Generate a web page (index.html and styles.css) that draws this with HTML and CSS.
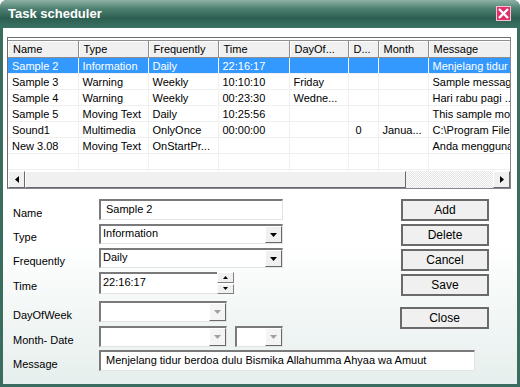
FILE: index.html
```
<!DOCTYPE html>
<html lang="en">
<head>
    <meta charset="UTF-8">
    <title>Task scheduler</title>
    <link rel="stylesheet" href="styles.css">
</head>
<body>
    <div class="window">
        <div class="titlebar">
            <span class="title">Task scheduler</span>
            <span class="close-x">
                <svg width="11" height="11" viewBox="0 0 11 11"><path d="M1 1 L10 10 M10 1 L1 10" stroke="#fff" stroke-width="2.4"/></svg>
            </span>
        </div>
        <div class="content">
            <div class="listview">
                <div class="list-clip">
                    <table class="grid">
                        <colgroup>
                            <col style="width:70px"><col style="width:70px"><col style="width:70px"><col style="width:71px">
                            <col style="width:59px"><col style="width:30px"><col style="width:50px"><col style="width:120px">
                        </colgroup>
                        <thead>
                            <tr><th>Name</th><th>Type</th><th>Frequently</th><th>Time</th><th>DayOf...</th><th>D...</th><th>Month</th><th>Message</th></tr>
                        </thead>
                        <tbody>
                            <tr class="selected"><td>Sample 2</td><td>Information</td><td>Daily</td><td>22:16:17</td><td></td><td></td><td></td><td>Menjelang tidur berdoa</td></tr>
                            <tr><td>Sample 3</td><td>Warning</td><td>Weekly</td><td>10:10:10</td><td>Friday</td><td></td><td></td><td>Sample message</td></tr>
                            <tr><td>Sample 4</td><td>Warning</td><td>Weekly</td><td>00:23:30</td><td>Wedne...</td><td></td><td></td><td>Hari rabu pagi ...</td></tr>
                            <tr><td>Sample 5</td><td>Moving Text</td><td>Daily</td><td>10:25:56</td><td></td><td></td><td></td><td>This sample moving</td></tr>
                            <tr><td>Sound1</td><td>Multimedia</td><td>OnlyOnce</td><td>00:00:00</td><td></td><td class="num">0</td><td>Janua...</td><td>C:\Program Files</td></tr>
                            <tr><td>New 3.08</td><td>Moving Text</td><td>OnStartPr...</td><td></td><td></td><td></td><td></td><td>Anda menggunakan</td></tr>
                            <tr><td></td><td></td><td></td><td></td><td></td><td></td><td></td><td></td></tr>
                            <tr><td></td><td></td><td></td><td></td><td></td><td></td><td></td><td></td></tr>
                        </tbody>
                    </table>
                </div>
                <div class="hscroll">
                    <div class="sb-btn"><svg width="4" height="7" viewBox="0 0 4 7"><path d="M4 0 L0 3.5 L4 7 Z" fill="#000"/></svg></div>
                    <div class="sb-thumb"></div>
                    <div class="sb-track"></div>
                    <div class="sb-btn"><svg width="4" height="7" viewBox="0 0 4 7"><path d="M0 0 L4 3.5 L0 7 Z" fill="#000"/></svg></div>
                </div>
            </div>

            <div class="form">
                <div class="fields">
                    <div class="row">
                        <label>Name</label>
                        <div class="edit wide">Sample 2</div>
                    </div>
                    <div class="row">
                        <label>Type</label>
                        <div class="combo wide"><span class="val">Information</span><span class="drop"><svg width="7" height="4" viewBox="0 0 7 4"><path d="M0 0 H7 L3.5 4 Z" fill="#000"/></svg></span></div>
                    </div>
                    <div class="row">
                        <label>Frequently</label>
                        <div class="combo wide"><span class="val">Daily</span><span class="drop"><svg width="7" height="4" viewBox="0 0 7 4"><path d="M0 0 H7 L3.5 4 Z" fill="#000"/></svg></span></div>
                    </div>
                    <div class="row">
                        <label>Time</label>
                        <div class="edit time">22:16:17</div>
                        <div class="spin">
                            <span class="spin-btn"><svg width="5" height="3" viewBox="0 0 5 3"><path d="M0 3 H5 L2.5 0 Z" fill="#000"/></svg></span>
                            <span class="spin-btn"><svg width="5" height="3" viewBox="0 0 5 3"><path d="M0 0 H5 L2.5 3 Z" fill="#000"/></svg></span>
                        </div>
                    </div>
                    <div class="row gap-top">
                        <label>DayOfWeek</label>
                        <div class="combo mid disabled"><span class="val"></span><span class="drop"><svg width="7" height="4" viewBox="0 0 7 4"><path d="M0 0 H7 L3.5 4 Z" fill="#a0a0a0"/></svg></span></div>
                    </div>
                    <div class="row">
                        <label>Month- Date</label>
                        <div class="combo mid disabled"><span class="val"></span><span class="drop"><svg width="7" height="4" viewBox="0 0 7 4"><path d="M0 0 H7 L3.5 4 Z" fill="#a0a0a0"/></svg></span></div>
                        <div class="combo small disabled"><span class="val"></span><span class="drop"><svg width="7" height="4" viewBox="0 0 7 4"><path d="M0 0 H7 L3.5 4 Z" fill="#a0a0a0"/></svg></span></div>
                    </div>
                </div>
                <div class="buttons">
                    <button>Add</button>
                    <button>Delete</button>
                    <button>Cancel</button>
                    <button>Save</button>
                    <button class="close-btn">Close</button>
                </div>
            </div>
            <div class="row message-row">
                <label>Message</label>
                <div class="edit message">Menjelang tidur berdoa dulu Bismika Allahumma Ahyaa wa Amuut</div>
            </div>
        </div>
    </div>
</body>
</html>
```
FILE: styles.css
```
body {
    margin: 0;
    background: #fff;
    font-family: 'Liberation Sans', Arial, sans-serif;
    font-size: 11px;
    color: #000;
}
.window {
    width: 520px;
    height: 387px;
    box-sizing: border-box;
    display: flex;
    flex-direction: column;
    border-radius: 7px 7px 0 0;
    overflow: hidden;
    background: #3a6d60;
}
.titlebar {
    height: 28px;
    flex: none;
    display: flex;
    align-items: center;
    justify-content: space-between;
    padding: 0 9px 0 8px;
    background: linear-gradient(#8fb3a7, #4f8272 30%, #2c5f51 65%, #3a7363);
}
.title {
    color: #fff;
    font-weight: bold;
    font-size: 13px;
    margin-top: -1px;
}
.close-x {
    width: 15px;
    height: 15px;
    margin-top: -2px;
    box-sizing: border-box;
    border: 1px solid #f2c4d2;
    background: #e0306b;
    display: flex;
    align-items: center;
    justify-content: center;
}
.content {
    flex: 1;
    margin: 0 3px 3px 3px;
    background: linear-gradient(#ffffff, #ffffff 60%, #e6efed);
    padding: 9px 5px 0 4px;
}
.listview {
    width: 504px;
    height: 152px;
    box-sizing: border-box;
    border: 1px solid #828790;
    border-top-color: #6d6d6d;
    border-left-color: #6d6d6d;
    background: #fff;
    display: flex;
    flex-direction: column;
}
.list-clip {
    flex: 1;
    overflow: hidden;
    padding-top: 2px;
}
.grid {
    border-collapse: collapse;
    table-layout: fixed;
    width: 520px;
}
.grid th {
    height: 17px;
    box-sizing: border-box;
    background: #f0f0f0;
    font-weight: normal;
    text-align: left;
    padding: 0 0 0 5px;
    border-right: 1px solid #8e8e8e;
    border-bottom: 1px solid #8e8e8e;
    border-top: 1px solid #8e8e8e;
    box-shadow: inset 1px 1px 0 #fff;
    white-space: nowrap;
    overflow: hidden;
}
.grid td {
    height: 15px;
    padding: 0 0 0 4px;
    border-right: 1px solid #f0f0f0;
    border-bottom: 1px solid #f0f0f0;
    white-space: nowrap;
    overflow: hidden;
    line-height: 14px;
}
.grid td.num {
    padding-left: 7px;
}
.grid tr.selected td {
    background: #3399ff;
    color: #fff;
    border-right-color: #fff;
}
.hscroll {
    height: 17px;
    flex: none;
    display: flex;
    background: #f0f0f0;
}
.sb-btn {
    width: 17px;
    box-sizing: border-box;
    border: 1px solid #fff;
    border-right-color: #696969;
    border-bottom-color: #696969;
    display: flex;
    align-items: center;
    justify-content: center;
}
.sb-thumb {
    width: 381px;
    box-sizing: border-box;
    background: #f0f0f0;
    border: 1px solid #fff;
    border-right-color: #696969;
    border-bottom-color: #696969;
}
.sb-track {
    flex: 1;
    background: repeating-conic-gradient(#fff 0 25%, #e3e3e3 0 50%) 0 0 / 2px 2px;
}
.form {
    display: flex;
    padding-top: 10px;
}
.fields {
    width: 394px;
    display: flex;
    flex-direction: column;
    gap: 4px;
}
.row {
    display: flex;
    align-items: center;
    gap: 8px;
}
.row label {
    width: 78px;
    padding-left: 6px;
    flex: none;
    margin-top: 6px;
}
.row.gap-top {
    margin-top: 3px;
}
.message-row {
    margin-top: 3px;
}
.edit {
    height: 21px;
    box-sizing: border-box;
    background: #fff;
    border-top: 2px solid #7a7a7a;
    border-left: 2px solid #7a7a7a;
    border-right: 1px solid #e3e3e3;
    border-bottom: 1px solid #e3e3e3;
    padding: 2px 0 0 5px;
    white-space: nowrap;
    overflow: hidden;
}
.edit.wide {
    width: 184px;
}
.edit.time {
    width: 118px;
    height: 22px;
    padding-left: 2px;
    border-right: none;
}
.edit.message {
    width: 376px;
    padding-left: 5px;
}
.spin {
    width: 17px;
    height: 22px;
    margin-left: -8px;
    display: flex;
    flex-direction: column;
    gap: 1px;
    background: #fff;
}
.spin-btn {
    flex: 1;
    background: #f0f0f0;
    border: 1px solid #fff;
    border-right-color: #808080;
    border-bottom-color: #808080;
    display: flex;
    align-items: center;
    justify-content: center;
}
.combo {
    height: 20px;
    box-sizing: border-box;
    display: flex;
    background: #fff;
    border-top: 2px solid #7a7a7a;
    border-left: 2px solid #7a7a7a;
    border-right: 1px solid #e3e3e3;
    border-bottom: 1px solid #e3e3e3;
}
.combo.wide {
    width: 184px;
}
.combo.mid {
    width: 128px;
    height: 21px;
}
.combo.small {
    width: 48px;
    height: 21px;
}
.combo .val {
    flex: 1;
    padding: 1px 0 0 2px;
}
.drop {
    width: 17px;
    box-sizing: border-box;
    background: #f0f0f0;
    border: 1px solid #fff;
    border-right-color: #696969;
    border-bottom-color: #696969;
    display: flex;
    align-items: center;
    justify-content: center;
}
.combo.disabled .drop {
    background: #f4f4f4;
}
.buttons {
    display: flex;
    flex-direction: column;
    gap: 3px;
    padding-left: 0;
}
.buttons button {
    width: 88px;
    height: 22px;
    box-sizing: border-box;
    background: #f0f0f0;
    border: 2px solid #6a6a6a;
    font-family: inherit;
    font-size: 12px;
    color: #000;
    padding: 0;
}
.buttons .close-btn {
    margin-top: 8px;
    width: 89px;
    margin-left: -1px;
}
```
